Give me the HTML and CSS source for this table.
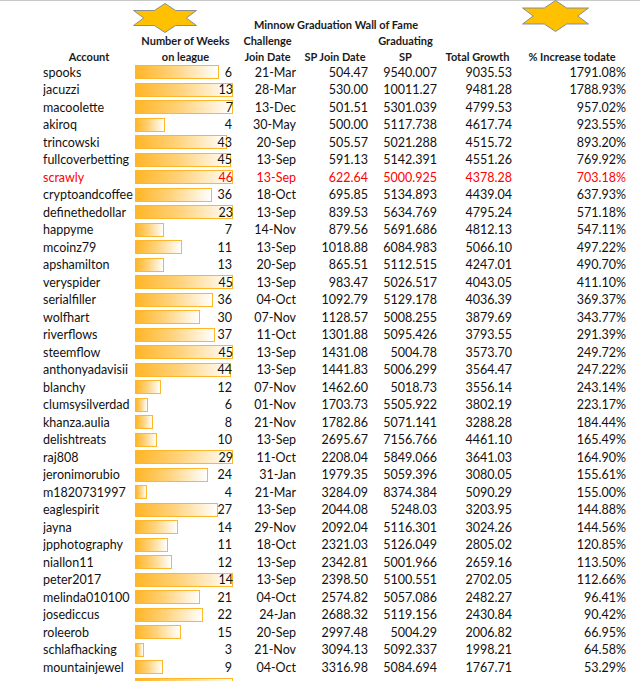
FILE: index.html
```html
<!DOCTYPE html>
<html lang="en">
<head>
<meta charset="utf-8">
<title>Minnow Graduation Wall of Fame</title>
<link rel="stylesheet" href="styles.css">
</head>
<body>
<div class="page">
  <svg class="star star-left" viewBox="0 0 64 30" preserveAspectRatio="none" aria-hidden="true">
    <polygon points="32,0.5 42.7,7.5 63.5,7.5 53.3,15 63.5,22.5 42.7,22.5 32,29.5 21.3,22.5 0.5,22.5 10.7,15 0.5,7.5 21.3,7.5"/>
  </svg>
  <svg class="star star-right" viewBox="0 0 67 32" preserveAspectRatio="none" aria-hidden="true">
    <polygon points="33.5,0.5 44.7,8 66.5,8 55.8,16 66.5,24 44.7,24 33.5,31.5 22.3,24 0.5,24 11.2,16 0.5,8 22.3,8"/>
  </svg>

  <div class="sheet">
    <div class="title">Minnow Graduation Wall of Fame</div>
    <div class="row head h1">
      <span></span><span>Number of Weeks</span><span>Challenge</span><span></span><span>Graduating</span><span></span><span></span>
    </div>
    <div class="row head h2">
      <span>Account</span><span>on league</span><span>Join Date</span><span>SP Join Date</span><span>SP</span><span>Total Growth</span><span>% Increase todate</span>
    </div>

    <div class="row"><span class="acct">spooks</span><span class="wk"><i class="bar" style="width:84px"></i><b>6</b></span><span>21-Mar</span><span>504.47</span><span>9540.007</span><span>9035.53</span><span>1791.08%</span></div>
    <div class="row"><span class="acct">jacuzzi</span><span class="wk"><i class="bar" style="width:98px"></i><b>13</b></span><span>28-Mar</span><span>530.00</span><span>10011.27</span><span>9481.28</span><span>1788.93%</span></div>
    <div class="row"><span class="acct">macoolette</span><span class="wk"><i class="bar" style="width:98px"></i><b>7</b></span><span>13-Dec</span><span>501.51</span><span>5301.039</span><span>4799.53</span><span>957.02%</span></div>
    <div class="row"><span class="acct">akiroq</span><span class="wk"><i class="bar" style="width:30px"></i><b>4</b></span><span>30-May</span><span>500.00</span><span>5117.738</span><span>4617.74</span><span>923.55%</span></div>
    <div class="row"><span class="acct">trincowski</span><span class="wk"><i class="bar" style="width:92px"></i><b>43</b></span><span>20-Sep</span><span>505.57</span><span>5021.288</span><span>4515.72</span><span>893.20%</span></div>
    <div class="row"><span class="acct">fullcoverbetting</span><span class="wk"><i class="bar" style="width:96px"></i><b>45</b></span><span>13-Sep</span><span>591.13</span><span>5142.391</span><span>4551.26</span><span>769.92%</span></div>
    <div class="row hl"><span class="acct">scrawly</span><span class="wk"><i class="bar" style="width:98px"></i><b>46</b></span><span>13-Sep</span><span>622.64</span><span>5000.925</span><span>4378.28</span><span>703.18%</span></div>
    <div class="row"><span class="acct">cryptoandcoffee</span><span class="wk"><i class="bar" style="width:77px"></i><b>36</b></span><span>18-Oct</span><span>695.85</span><span>5134.893</span><span>4439.04</span><span>637.93%</span></div>
    <div class="row"><span class="acct">definethedollar</span><span class="wk"><i class="bar" style="width:98px"></i><b>23</b></span><span>13-Sep</span><span>839.53</span><span>5634.769</span><span>4795.24</span><span>571.18%</span></div>
    <div class="row"><span class="acct">happyme</span><span class="wk"><i class="bar" style="width:29px"></i><b>7</b></span><span>14-Nov</span><span>879.56</span><span>5691.686</span><span>4812.13</span><span>547.11%</span></div>
    <div class="row"><span class="acct">mcoinz79</span><span class="wk"><i class="bar" style="width:47px"></i><b>11</b></span><span>13-Sep</span><span>1018.88</span><span>6084.983</span><span>5066.10</span><span>497.22%</span></div>
    <div class="row"><span class="acct">apshamilton</span><span class="wk"><i class="bar" style="width:29px"></i><b>13</b></span><span>20-Sep</span><span>865.51</span><span>5112.515</span><span>4247.01</span><span>490.70%</span></div>
    <div class="row"><span class="acct">veryspider</span><span class="wk"><i class="bar" style="width:98px"></i><b>45</b></span><span>13-Sep</span><span>983.47</span><span>5026.517</span><span>4043.05</span><span>411.10%</span></div>
    <div class="row"><span class="acct">serialfiller</span><span class="wk"><i class="bar" style="width:78px"></i><b>36</b></span><span>04-Oct</span><span>1092.79</span><span>5129.178</span><span>4036.39</span><span>369.37%</span></div>
    <div class="row"><span class="acct">wolfhart</span><span class="wk"><i class="bar" style="width:65px"></i><b>30</b></span><span>07-Nov</span><span>1128.57</span><span>5008.255</span><span>3879.69</span><span>343.77%</span></div>
    <div class="row"><span class="acct">riverflows</span><span class="wk"><i class="bar" style="width:80px"></i><b>37</b></span><span>11-Oct</span><span>1301.88</span><span>5095.426</span><span>3793.55</span><span>291.39%</span></div>
    <div class="row"><span class="acct">steemflow</span><span class="wk"><i class="bar" style="width:98px"></i><b>45</b></span><span>13-Sep</span><span>1431.08</span><span>5004.78</span><span>3573.70</span><span>249.72%</span></div>
    <div class="row"><span class="acct">anthonyadavisii</span><span class="wk"><i class="bar" style="width:96px"></i><b>44</b></span><span>13-Sep</span><span>1441.83</span><span>5006.299</span><span>3564.47</span><span>247.22%</span></div>
    <div class="row"><span class="acct">blanchy</span><span class="wk"><i class="bar" style="width:26px"></i><b>12</b></span><span>07-Nov</span><span>1462.60</span><span>5018.73</span><span>3556.14</span><span>243.14%</span></div>
    <div class="row"><span class="acct">clumsysilverdad</span><span class="wk"><i class="bar" style="width:13px"></i><b>6</b></span><span>01-Nov</span><span>1703.73</span><span>5505.922</span><span>3802.19</span><span>223.17%</span></div>
    <div class="row"><span class="acct">khanza.aulia</span><span class="wk"><i class="bar" style="width:18px"></i><b>8</b></span><span>21-Nov</span><span>1782.86</span><span>5071.141</span><span>3288.28</span><span>184.44%</span></div>
    <div class="row"><span class="acct">delishtreats</span><span class="wk"><i class="bar" style="width:22px"></i><b>10</b></span><span>13-Sep</span><span>2695.67</span><span>7156.766</span><span>4461.10</span><span>165.49%</span></div>
    <div class="row"><span class="acct">raj808</span><span class="wk"><i class="bar" style="width:98px"></i><b>29</b></span><span>11-Oct</span><span>2208.04</span><span>5849.066</span><span>3641.03</span><span>164.90%</span></div>
    <div class="row"><span class="acct">jeronimorubio</span><span class="wk"><i class="bar" style="width:73px"></i><b>24</b></span><span>31-Jan</span><span>1979.35</span><span>5059.396</span><span>3080.05</span><span>155.61%</span></div>
    <div class="row"><span class="acct">m1820731997</span><span class="wk"><i class="bar" style="width:12px"></i><b>4</b></span><span>21-Mar</span><span>3284.09</span><span>8374.384</span><span>5090.29</span><span>155.00%</span></div>
    <div class="row"><span class="acct">eaglespirit</span><span class="wk"><i class="bar" style="width:83px"></i><b>27</b></span><span>13-Sep</span><span>2044.08</span><span>5248.03</span><span>3203.95</span><span>144.88%</span></div>
    <div class="row"><span class="acct">jayna</span><span class="wk"><i class="bar" style="width:43px"></i><b>14</b></span><span>29-Nov</span><span>2092.04</span><span>5116.301</span><span>3024.26</span><span>144.56%</span></div>
    <div class="row"><span class="acct">jpphotography</span><span class="wk"><i class="bar" style="width:33px"></i><b>11</b></span><span>18-Oct</span><span>2321.03</span><span>5126.049</span><span>2805.02</span><span>120.85%</span></div>
    <div class="row"><span class="acct">niallon11</span><span class="wk"><i class="bar" style="width:37px"></i><b>12</b></span><span>13-Sep</span><span>2342.81</span><span>5001.966</span><span>2659.16</span><span>113.50%</span></div>
    <div class="row"><span class="acct">peter2017</span><span class="wk"><i class="bar" style="width:98px"></i><b>14</b></span><span>13-Sep</span><span>2398.50</span><span>5100.551</span><span>2702.05</span><span>112.66%</span></div>
    <div class="row"><span class="acct">melinda010100</span><span class="wk"><i class="bar" style="width:65px"></i><b>21</b></span><span>04-Oct</span><span>2574.82</span><span>5057.086</span><span>2482.27</span><span>96.41%</span></div>
    <div class="row"><span class="acct">josediccus</span><span class="wk"><i class="bar" style="width:68px"></i><b>22</b></span><span>24-Jan</span><span>2688.32</span><span>5119.156</span><span>2430.84</span><span>90.42%</span></div>
    <div class="row"><span class="acct">roleerob</span><span class="wk"><i class="bar" style="width:46px"></i><b>15</b></span><span>20-Sep</span><span>2997.48</span><span>5004.29</span><span>2006.82</span><span>66.95%</span></div>
    <div class="row"><span class="acct">schlafhacking</span><span class="wk"><i class="bar" style="width:9px"></i><b>3</b></span><span>21-Nov</span><span>3094.13</span><span>5092.337</span><span>1998.21</span><span>64.58%</span></div>
    <div class="row"><span class="acct">mountainjewel</span><span class="wk"><i class="bar" style="width:28px"></i><b>9</b></span><span>04-Oct</span><span>3316.98</span><span>5084.694</span><span>1767.71</span><span>53.29%</span></div>
    <div class="row"><span class="acct"></span><span class="wk"><i class="bar" style="width:98px"></i><b></b></span><span></span><span></span><span></span><span></span><span></span></div>
  </div>
</div>
</body>
</html>
```
FILE: styles.css
```css
html, body {
  margin: 0;
  padding: 0;
  background: #ffffff;
}

body {
  height: 681px;
  overflow: hidden;
  font-family: "Lato", "Liberation Sans", sans-serif;
  color: #111111;
}

.page {
  position: relative;
  border-top: 1px solid #c8c8c8;
  height: 680px;
}

.star {
  position: absolute;
  display: block;
}

.star polygon {
  fill: #ffc000;
  stroke: #7a8798;
  stroke-width: 0.9;
  vector-effect: non-scaling-stroke;
}

.star-left {
  left: 133px;
  top: 2px;
  width: 64px;
  height: 30px;
}

.star-right {
  left: 522px;
  top: -1px;
  width: 67px;
  height: 32px;
}

.sheet {
  padding: 14.5px 0 0 43px;
}

.title {
  width: 586px;
  height: 17px;
  line-height: 17px;
  text-align: center;
  font-weight: 700;
  font-size: 11px;
  color: #1a1a1a;
}

.row {
  display: grid;
  grid-template-columns: 92px 101px 63px 72px 69px 75px 114px;
  height: 17.5px;
  align-items: center;
  font-size: 12.5px;
  line-height: 17.5px;
  white-space: nowrap;
}

.row > span {
  text-align: right;
  padding-right: 3px;
}

.row > span.acct {
  text-align: left;
  padding-right: 0;
  overflow: hidden;
}

.head {
  font-weight: 700;
  font-size: 11px;
  color: #1a1a1a;
}

.head > span {
  text-align: center;
  padding-right: 0;
}

.h1 {
  height: 16px;
  line-height: 16px;
}

.h2 {
  height: 15px;
  line-height: 15px;
}

.head > span:first-child {
  text-align: center;
}

.wk {
  display: grid;
  height: 17.5px;
  padding-right: 4px !important;
}

.wk > .bar,
.wk > b {
  grid-area: 1 / 1;
}

.bar {
  justify-self: start;
  align-self: center;
  box-sizing: border-box;
  height: 14px;
  border: 1px solid #ffb628;
  background: linear-gradient(to right, #ffb628 0%, #ffd27a 45%, #ffffff 100%);
}

.wk > b {
  position: relative;
  justify-self: end;
  font-weight: 400;
}

.hl {
  color: #ff0000;
}
```
